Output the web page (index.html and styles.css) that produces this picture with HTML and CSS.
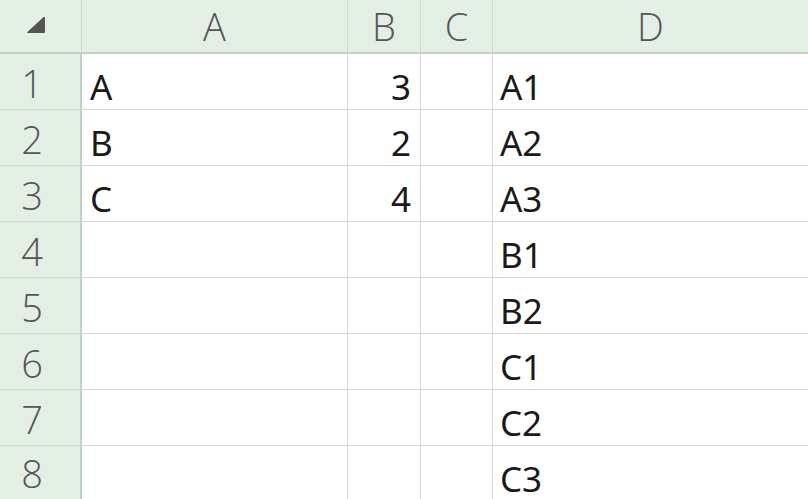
FILE: index.html
```html
<!DOCTYPE html>
<html>
<head>
<meta charset="utf-8">
<link rel="stylesheet" href="styles.css">
</head>
<body>
<div class="sheet">
  <div class="hd corner"><svg class="tri" width="20" height="18" viewBox="0 0 20 18"><path d="M1.5 16.5 L17.5 1.5 Q18.5 0.8 18.5 2 L18.5 16.5 Z" fill="#555" stroke="#555" stroke-width="1" stroke-linejoin="round"/></svg></div>
  <div class="hd col">A</div>
  <div class="hd col">B</div>
  <div class="hd col">C</div>
  <div class="hd col last">D</div>

  <div class="hd row">1</div><div class="c">A</div><div class="c num">3</div><div class="c"></div><div class="c last">A1</div>
  <div class="hd row">2</div><div class="c">B</div><div class="c num">2</div><div class="c"></div><div class="c last">A2</div>
  <div class="hd row">3</div><div class="c">C</div><div class="c num">4</div><div class="c"></div><div class="c last">A3</div>
  <div class="hd row">4</div><div class="c"></div><div class="c num"></div><div class="c"></div><div class="c last">B1</div>
  <div class="hd row">5</div><div class="c"></div><div class="c num"></div><div class="c"></div><div class="c last">B2</div>
  <div class="hd row">6</div><div class="c"></div><div class="c num"></div><div class="c"></div><div class="c last">C1</div>
  <div class="hd row">7</div><div class="c"></div><div class="c num"></div><div class="c"></div><div class="c last">C2</div>
  <div class="hd row end">8</div><div class="c end"></div><div class="c num end"></div><div class="c end"></div><div class="c last end">C3</div>
</div>
</body>
</html>
```
FILE: styles.css
```css
html, body {
  margin: 0;
  padding: 0;
  background: #ffffff;
  overflow: hidden;
}
.sheet {
  display: grid;
  grid-template-columns: 82px 266px 73px 72px 315px;
  grid-template-rows: 54px repeat(7, 56px) 53px;
  width: 808px;
}
.hd {
  background: #e3efe5;
  color: #555555;
  font-family: "Open Sans", "Noto Sans", sans-serif;
  font-weight: 300;
  font-size: 38px;
  box-sizing: border-box;
  display: flex;
  align-items: center;
  justify-content: center;
}
.corner {
  border-right: 1px solid #c9dacc;
  border-bottom: 2px solid #bfd2c3;
  justify-content: flex-start;
  align-items: flex-start;
  padding: 16px 0 0 26px;
}
.tri { display: block; }
.col {
  border-right: 1px solid #c9dacc;
  border-bottom: 2px solid #bfd2c3;
  padding-bottom: 0;
}
.col.last { border-right: none; }
.row {
  border-right: 2px solid #bfd2c3;
  border-bottom: 1px solid #c9dacc;
  padding-right: 16px;
  padding-top: 2px;
}
.row.end { border-bottom: none; padding-top: 0; line-height: 1; }
.c {
  box-sizing: border-box;
  border-right: 1px solid #d6d6d6;
  border-bottom: 1px solid #d6d6d6;
  font-family: "Noto Sans", sans-serif;
  font-size: 35px;
  color: #1a1a1a;
  display: flex;
  align-items: flex-end;
  padding: 0 8px 0 8px;
  line-height: 1;
  padding-bottom: 5px;
}
.c.end { border-bottom: none; padding-bottom: 3px; }
.c.num { justify-content: flex-end; padding-right: 9px; }
.c.last { border-right: none; padding-left: 7px; }
```
